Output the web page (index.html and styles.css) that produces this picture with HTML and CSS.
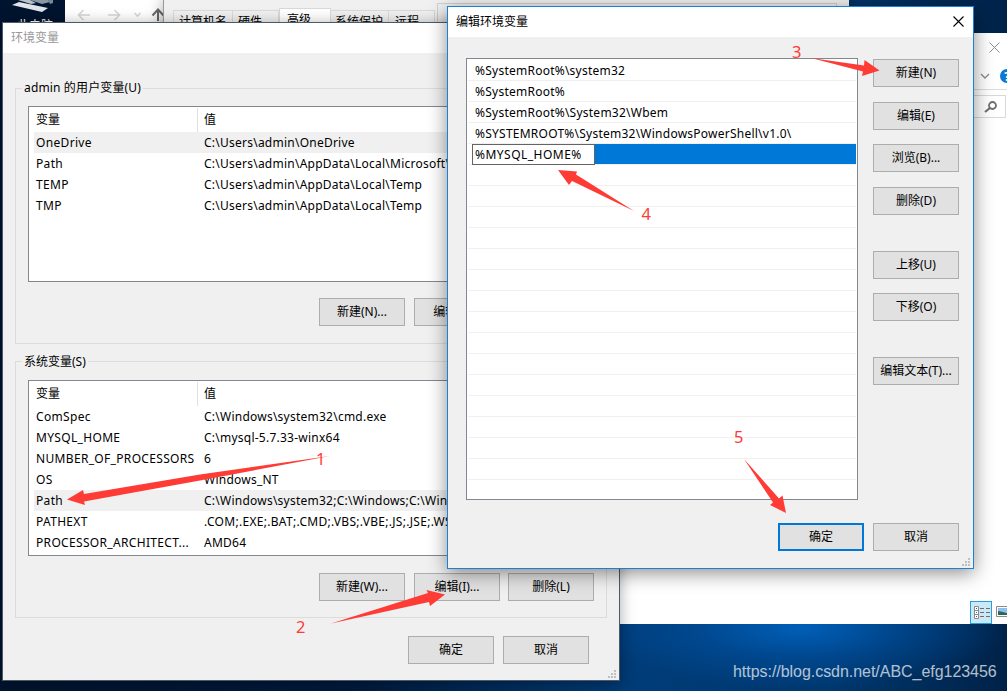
FILE: index.html
```html
<!DOCTYPE html>
<html lang="zh-CN">
<head>
    <meta charset="UTF-8">
    <meta name="viewport" content="width=device-width, initial-scale=1.0">
    <title>编辑环境变量</title>
    <link rel="stylesheet" href="styles.css">
</head>

<body>
<div class="desktop">
    <div class="desktop-icon">
        <svg width="48" height="14" viewBox="0 0 48 14">
            <path d="M18 0h18l2 2-8 2z" fill="#8a97a6"/>
            <path d="M0 5l7-3 29 6-6 4z" fill="#dfe4e9"/>
            <path d="M6 0h12l6 3-5 1z" fill="#b8c0c9"/>
            <path d="M36 0h5v3l-3 1z" fill="#77879a"/>
        </svg>
        <span>此电脑</span>
    </div>

    <div class="explorer-left">
        <svg width="100" height="24" viewBox="0 0 100 24" fill="none" stroke="#d5d5d5" stroke-width="1.6">
            <path d="M25 15H13.500M18.500 10l-5 5 5 5"/>
            <path d="M43 15h11.500M49.500 10l5 5-5 5"/>
            <path d="M69.500 13l3 3 3-3"/>
            <path d="M93 21V10M87.500 15.500l5.500-6 5.500 6" stroke="#6b6b6b" stroke-width="2"/>
        </svg>
    </div>

    <div class="explorer-right">
        <div class="explorer-title">
            <svg width="11" height="11" viewBox="0 0 11 11"><path d="M.5.5l10 10M10.500.5l-10 10" stroke="#8c8c8c"/></svg>
        </div>
        <div class="ribbon">
            <svg width="27" height="14" viewBox="0 0 27 14">
                <path d="M1 5l4 4 4-4" fill="none" stroke="#8c8c8c" stroke-width="1.400"/>
                <circle cx="27" cy="7" r="7" fill="#0a78d6"/>
            </svg>
            <span class="help">?</span>
        </div>
        <div class="search">
            <svg width="13" height="12" viewBox="0 0 13 12" fill="none" stroke="#6e6e6e"><circle cx="8.500" cy="4.500" r="3.500" stroke-width="1.800"/><path d="M6 7l-5 4" stroke-width="2.200"/></svg>
        </div>
        <div class="view-modes">
            <div class="view-details">
                <svg width="17" height="14" viewBox="0 0 17 14">
                    <path d="M.5.5h4v12h-4zM.5 4.500h4M.5 8.500h4" fill="#fff" stroke="#8a8a8a"/>
                    <path d="M6 2.500h4M12 2.500h4M6 6.500h4M12 6.500h4M6 10.500h4M12 10.500h4" stroke="#6e6e6e"/>
                    <path d="M2 2h1v1H2z" fill="#555"/><path d="M2 6h1v1H2z" fill="#2a7fff"/><path d="M2 10h1v1H2z" fill="#d22"/>
                </svg>
            </div>
            <svg class="view-thumbs" width="16" height="11" viewBox="0 0 16 11">
                <path d="M.5.5h15v10H.5z" fill="#fff" stroke="#8a8a8a"/>
                <path d="M2 2h12v7H2z" fill="#8fc1ef"/><path d="M2 5l5 1 7 2v1H2z" fill="#2d6656"/>
            </svg>
        </div>
    </div>

    <div class="system-props">
        <div class="tabs">
            <span class="tab tab-name">计算机名</span>
            <span class="tab tab-hardware">硬件</span>
            <span class="tab tab-active">高级</span>
            <span class="tab tab-protect">系统保护</span>
            <span class="tab tab-remote">远程</span>
        </div>
        <div class="props-edge"></div>
    </div>

    <div class="window env-window">
        <div class="titlebar inactive">环境变量</div>
        <div class="env-body">
            <div class="group user-group">
                <div class="legend">admin 的用户变量(U)</div>
                <div class="listview">
                    <div class="row head"><span>变量</span><span>值</span></div>
                    <div class="row selected"><span>OneDrive</span><span>C:\Users\admin\OneDrive</span></div>
                    <div class="row"><span>Path</span><span>C:\Users\admin\AppData\Local\Microsoft\WindowsApps;</span></div>
                    <div class="row"><span>TEMP</span><span>C:\Users\admin\AppData\Local\Temp</span></div>
                    <div class="row"><span>TMP</span><span>C:\Users\admin\AppData\Local\Temp</span></div>
                </div>
                <div class="group-buttons">
                    <div class="btn">新建(N)...</div>
                    <div class="btn">编辑(E)...</div>
                    <div class="btn">删除(D)</div>
                </div>
            </div>
            <div class="group sys-group">
                <div class="legend">系统变量(S)</div>
                <div class="listview">
                    <div class="row head"><span>变量</span><span>值</span></div>
                    <div class="row"><span>ComSpec</span><span>C:\Windows\system32\cmd.exe</span></div>
                    <div class="row"><span>MYSQL_HOME</span><span>C:\mysql-5.7.33-winx64</span></div>
                    <div class="row"><span>NUMBER_OF_PROCESSORS</span><span>6</span></div>
                    <div class="row"><span>OS</span><span>Windows_NT</span></div>
                    <div class="row selected"><span>Path</span><span>C:\Windows\system32;C:\Windows;C:\Windows\System32\Wbem;</span></div>
                    <div class="row"><span>PATHEXT</span><span class="wide">.COM;.EXE;.BAT;.CMD;.VBS;.VBE;.JS;.JSE;.WSF;.WSH;.MSC</span></div>
                    <div class="row"><span>PROCESSOR_ARCHITECT...</span><span>AMD64</span></div>
                </div>
                <div class="group-buttons">
                    <div class="btn">新建(W)...</div>
                    <div class="btn">编辑(I)...</div>
                    <div class="btn">删除(L)</div>
                </div>
            </div>
            <div class="env-footer">
                <div class="btn">确定</div>
                <div class="btn">取消</div>
            </div>
        </div>
        <svg class="grip" width="9" height="9" viewBox="0 0 9 9"><path d="M6 0h2v2H6zM3 3h2v2H3zM6 3h2v2H6zM0 6h2v2H0zM3 6h2v2H3zM6 6h2v2H6z" fill="#bfbfbf"/></svg>
    </div>

    <div class="window edit-window">
        <div class="titlebar">
            <span>编辑环境变量</span>
            <svg width="11" height="11" viewBox="0 0 11 11"><path d="M.5.5l10 10M10.500.5l-10 10" stroke="#000" stroke-width="1.100"/></svg>
        </div>
        <div class="edit-body">
            <div class="path-list">
                <div class="path">%SystemRoot%\system32</div>
                <div class="path">%SystemRoot%</div>
                <div class="path">%SystemRoot%\System32\Wbem</div>
                <div class="path">%SYSTEMROOT%\System32\WindowsPowerShell\v1.0\</div>
                <div class="path editing"><span>%MYSQL_HOME%</span></div>
                <div class="path"></div><div class="path"></div><div class="path"></div>
                <div class="path"></div><div class="path"></div><div class="path"></div>
                <div class="path"></div><div class="path"></div><div class="path"></div>
                <div class="path"></div><div class="path"></div><div class="path"></div>
                <div class="path"></div><div class="path"></div><div class="path"></div>
            </div>
            <div class="side-buttons">
                <div class="btn">新建(N)</div>
                <div class="btn gap-15">编辑(E)</div>
                <div class="btn gap-14">浏览(B)...</div>
                <div class="btn gap-15">删除(D)</div>
                <div class="btn gap-36">上移(U)</div>
                <div class="btn gap-14">下移(O)</div>
                <div class="btn gap-36">编辑文本(T)...</div>
            </div>
        </div>
        <div class="edit-footer">
            <div class="btn default">确定</div>
            <div class="btn">取消</div>
        </div>
        <svg class="grip" width="9" height="9" viewBox="0 0 9 9"><path d="M6 0h2v2H6zM3 3h2v2H3zM6 3h2v2H6zM0 6h2v2H0zM3 6h2v2H3zM6 6h2v2H6z" fill="#bfbfbf"/></svg>
    </div>

    <!-- step arrows -->
    <svg class="steps" width="1007" height="691" viewBox="0 0 1007 691">
        <path d="M67 499.500L83 490L84 494L200 474.500L330 456L200 480.500L84 501.500L85 505Z"/>
        <path d="M445 594.500L426.500 590L428 593L331 623.500L429 602L430 606Z"/>
        <path d="M879.500 70.500L864.500 60L864 65.500L811 58L863 71.500L862 76Z"/>
        <path d="M558 170L577 171.500L576 174.500L634 211L572 181L569 185Z"/>
        <path d="M786 513L782.500 495.500L779 498.500L744 459L773 502.500L770 505Z"/>
        <text x="316" y="465">1</text>
        <text x="296" y="633">2</text>
        <text x="792" y="58">3</text>
        <text x="641.500" y="220">4</text>
        <text x="734" y="443">5</text>
    </svg>
    <div class="watermark">https://blog.csdn.net/ABC_efg123456</div>
</div>
</body>
</html>
```
FILE: styles.css
```css
* {
    margin: 0;
    padding: 0;
    box-sizing: border-box;
}

body {
    font-family: "Noto Sans", "Noto Sans CJK SC", sans-serif;
    font-size: 12px;
    color: #000;
    overflow: hidden;
}

.desktop {
    position: relative;
    width: 1007px;
    height: 691px;
    overflow: hidden;
    background:
        radial-gradient(ellipse 210px 60px at 800px 628px, #005fb8 0%, rgba(0, 80, 160, 0.6) 50%, rgba(0, 60, 120, 0) 100%),
        linear-gradient(90deg, #00142f 0%, #001a3d 35%, #003c78 63%, #00386f 82%, #002248 100%);
}

.desktop-icon {
    position: absolute;
    left: 0;
    top: 0;
    width: 65px;
    height: 32px;
    padding-left: 12px;
    background: #00142f;
    color: #fff;
    line-height: 18px;
}

.desktop-icon svg {
    display: block;
}

.desktop-icon span {
    display: block;
    margin: 3px 0 0 5px;
}

.explorer-left {
    position: absolute;
    left: 65px;
    top: 0;
    width: 100px;
    height: 60px;
    background: #fff;
}

.explorer-right {
    position: absolute;
    left: 600px;
    top: 33px;
    width: 420px;
    height: 591px;
    padding-right: 13px;
    background: #fff;
}

.explorer-title {
    display: flex;
    justify-content: flex-end;
    height: 30px;
    padding: 9px 7px 0 0;
}

.ribbon {
    position: relative;
    display: flex;
    justify-content: flex-end;
    height: 27px;
    padding-top: 6px;
    border-bottom: 1px solid #dcdcdc;
}

.help {
    position: absolute;
    right: -3px;
    top: 5px;
    color: #fff;
    font-weight: bold;
}

.search {
    display: flex;
    justify-content: flex-end;
    height: 23px;
    margin: 5px 1px 0 0;
    padding: 5px 8px 0 0;
    border: 1px solid #d9d9d9;
}

.view-modes {
    display: flex;
    gap: 4px;
    margin: 483px 0 0 370px;
    align-items: center;
    width: 60px;
}

.view-details {
    flex: none;
    width: 22px;
    height: 23px;
    padding: 4px 0 0 3px;
    border: 1px solid #26a0da;
    background: #cbe8f6;
}

.view-thumbs {
    flex: none;
    margin-top: -2px;
}

.system-props {
    position: absolute;
    left: 163px;
    top: 0;
    width: 686px;
    height: 60px;
    padding: 8px 0 0 9px;
    background: #f0f0f0;
    border-left: 1px solid #999;
    box-shadow: 0 0 14px rgba(0, 0, 0, 0.35);
}

.tabs {
    display: flex;
    align-items: flex-end;
    height: 30px;
}

.tab {
    height: 28px;
    padding: 1px 0 0 5px;
    border: 1px solid #d9d9d9;
    border-left: 0;
    line-height: 19px;
}

.tab-name {
    width: 60px;
    border-left: 1px solid #d9d9d9;
}

.tab-hardware {
    width: 46px;
}

.tab-active {
    width: 52px;
    height: 30px;
    padding-left: 7px;
    border-left: 1px solid #d9d9d9;
    background: #fff;
}

.tab-protect {
    width: 58px;
    padding-left: 4px;
}

.tab-remote {
    width: 46px;
    padding-left: 6px;
}

.props-edge {
    position: absolute;
    left: 273px;
    top: 3px;
    width: 400px;
    height: 20px;
    border: 1px solid #d0d0d0;
}

.window {
    position: absolute;
    background: #f0f0f0;
}

.env-window {
    left: 2px;
    top: 22px;
    width: 618px;
    height: 659px;
    border: 1px solid #4c5a68;
    box-shadow: 0 2px 14px rgba(0, 0, 0, 0.35);
}

.titlebar {
    display: flex;
    justify-content: space-between;
    height: 30px;
    padding: 0 9px 0 8px;
    background: #fff;
    line-height: 29px;
}

.titlebar svg {
    margin-top: 9px;
}

.inactive {
    color: #999;
}

.env-body {
    padding: 35px 12px 0;
}

.group {
    width: 592px;
    padding: 0 12px;
    border: 1px solid #dcdcdc;
}

.user-group {
    height: 256px;
}

.sys-group {
    height: 257px;
    margin-top: 17px;
}

.legend {
    width: fit-content;
    height: 18px;
    margin: -9px 0 9px -6px;
    padding: 0 2px;
    background: #f0f0f0;
    line-height: 17px;
}

.user-group .legend {
    margin-top: -10px;
    letter-spacing: 0.15px;
}

.listview {
    height: 176px;
    border: 1px solid #828790;
    background: #fff;
    overflow: hidden;
}

.row {
    display: grid;
    grid-template-columns: 164px 1fr;
    height: 21px;
    margin-left: 5px;
    line-height: 22px;
    white-space: nowrap;
}

.row span {
    padding-left: 2px;
    letter-spacing: 0.33px;
}

.row span + span {
    padding-left: 6px;
    letter-spacing: 0.24px;
}

.row .wide {
    letter-spacing: 0.3px;
}

.head {
    height: 25px;
    padding-top: 1px;
    line-height: 24px;
}

.user-group .row:not(.head) {
    line-height: 21px;
}

.head span:first-child {
    border-right: 1px solid #e0e0e0;
    letter-spacing: 0;
}

.selected {
    background: #f0f0f0;
}

.group-buttons {
    display: grid;
    grid-template-columns: 95px 94px 86px;
    justify-content: end;
    margin-top: 16px;
}

.sys-group .group-buttons {
    margin-top: 17px;
}

.btn {
    width: 86px;
    height: 28px;
    border: 1px solid #adadad;
    background: #e1e1e1;
    text-align: center;
    line-height: 25px;
    white-space: nowrap;
}

.default {
    border: 2px solid #0078d7;
    line-height: 23px;
}

.env-footer {
    display: flex;
    justify-content: flex-end;
    gap: 9px;
    margin: 18px 18px 0 0;
}

.grip {
    position: absolute;
    right: 2px;
    bottom: 1px;
}

.edit-window {
    left: 447px;
    top: 6px;
    width: 527px;
    height: 563px;
    border: 1px solid #1a80d9;
    box-shadow: 0 4px 18px rgba(0, 0, 0, 0.45);
}

.edit-body {
    display: flex;
    gap: 15px;
    padding: 21px 14px 0 18px;
}

.path-list {
    width: 392px;
    height: 442px;
    padding: 1px;
    border: 1px solid #828790;
    background: #fff;
}

.path {
    height: 21px;
    padding-left: 7px;
    border-bottom: 1px solid #f0f0f0;
    line-height: 21px;
    letter-spacing: 0.24px;
}

.editing {
    padding-left: 4px;
    background: linear-gradient(90deg, #fff 4px, #0078d7 4px) padding-box;
    letter-spacing: 0.48px;
}

.editing span {
    display: block;
    width: 123px;
    height: 21px;
    padding-left: 2px;
    border: 1px solid #646464;
    background: #fff;
    line-height: 19px;
}

.side-buttons {
    padding-top: 1px;
}

.gap-14 {
    margin-top: 14px;
}

.gap-15 {
    margin-top: 15px;
}

.gap-36 {
    margin-top: 36px;
}

.edit-footer {
    display: flex;
    justify-content: flex-end;
    gap: 9px;
    margin: 23px 14px 0 0;
}

.steps {
    position: absolute;
    left: 0;
    top: 0;
    fill: #ff3b36;
    font-size: 16.5px;
}

.watermark {
    position: absolute;
    left: 733px;
    top: 662px;
    color: rgba(225, 232, 240, 0.8);
    font-family: "Liberation Sans", sans-serif;
    font-size: 16px;
    line-height: 20px;
    letter-spacing: -0.04px;
    white-space: nowrap;
}
```
